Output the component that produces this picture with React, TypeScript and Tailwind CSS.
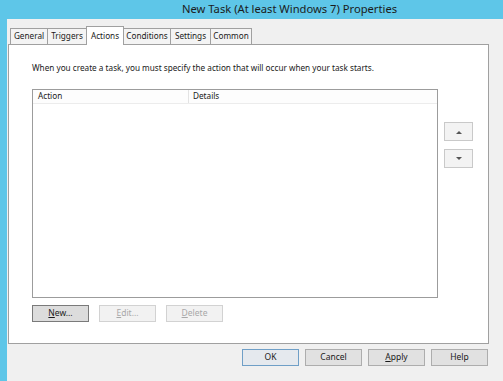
import React, { useState } from 'react';

const font = { fontFamily: '"Noto Sans", "Segoe UI", Arial, sans-serif' };

const TABS = ['General', 'Triggers', 'Actions', 'Conditions', 'Settings', 'Common'];
const TAB_WIDTHS: Record<string, string> = {
  General: 'w-[38px]',
  Triggers: 'w-[39px]',
  Actions: 'w-[38px]',
  Conditions: 'w-[47px]',
  Settings: 'w-[40px]',
  Common: 'w-[41px]',
};

const Btn: React.FC<{ label: string; hot?: number; variant?: 'normal' | 'focus' | 'default' | 'disabled' }> = ({
  label,
  hot,
  variant = 'normal',
}) => {
  const styles = {
    normal: 'bg-[#e1e1e1] border-[#adadad] text-[#1a1a1a]',
    focus: 'bg-[#dcdcdc] border-[#7a7a7a] text-[#1a1a1a]',
    default: 'bg-[#e5e9ee] border-[#6f9fc7] text-[#1a1a1a]',
    disabled: 'bg-[#f2f2f2] border-[#d2d2d2] text-[#a8a8a8]',
  }[variant];
  return (
    <button className={`w-[57px] h-[17px] border flex items-center justify-center text-[8.5px] leading-none ${styles}`}>
      {hot !== undefined ? (
        <span>
          {label.slice(0, hot)}
          <span className="underline">{label[hot]}</span>
          {label.slice(hot + 1)}
        </span>
      ) : (
        label
      )}
    </button>
  );
};

const App: React.FC = () => {
  const [activeTab, setActiveTab] = useState('Actions');

  return (
    <div className="w-[503px] h-[381px] overflow-hidden flex flex-col bg-[#5ec6e8]" style={font}>
      {/* Title bar */}
      <div className="h-[19px] shrink-0 flex items-center pl-[182px] text-[11.2px] text-[#1b1b1b] whitespace-nowrap">
        New Task (At least Windows 7) Properties
      </div>

      <div className="flex-1 flex">
        {/* left window frame */}
        <div className="w-[7px] shrink-0" />

        <div className="flex-1 bg-[#f0f0f0] flex flex-col pl-[1px]">
          {/* Tabs */}
          <div className="flex items-end h-[25px] pl-[2px] pt-[6px] relative z-10">
            {TABS.map((t) => {
              const active = t === activeTab;
              return (
                <div
                  key={t}
                  onClick={() => setActiveTab(t)}
                  className={`${TAB_WIDTHS[t]} flex justify-center cursor-default text-[8.2px] text-[#1a1a1a] border-[#a0a0a0] border-t border-r ${
                    t === 'General' ? 'border-l' : ''
                  } ${
                    active
                      ? 'bg-white h-[19px] -mb-[1px] items-start pt-[3px] border-l -ml-[1px]'
                      : 'bg-[#f4f4f4] h-[16px] items-center'
                  }`}
                >
                  {t}
                </div>
              );
            })}
          </div>

          {/* Tab panel */}
          <div className="w-[481px] h-[300px] bg-white border border-[#a0a0a0] pl-[23px] flex flex-col">
            <p className="mt-[17px] text-[8.2px] leading-[12px] text-[#1a1a1a] whitespace-nowrap">
              When you create a task, you must specify the action that will occur when your task starts.
            </p>

            <div className="mt-[15px] flex">
              {/* list view */}
              <div className="w-[406px] h-[209px] border border-[#9c9c9c] flex flex-col">
                <div className="h-[14px] flex text-[8.2px] text-[#1a1a1a] border-b border-[#ececec] bg-[#fdfdfd]">
                  <div className="w-[156px] border-r border-[#e3e3e3] pl-[5px] flex items-center">Action</div>
                  <div className="flex-1 pl-[4px] flex items-center">Details</div>
                </div>
                <div className="flex-1 bg-white" />
              </div>

              <div className="ml-[6px] mt-[33px] flex flex-col gap-[8px]">
                <button className="w-[29px] h-[19px] bg-[#f3f3f3] border border-[#c9c9c9] flex items-center justify-center">
                  <svg width="6" height="4" viewBox="0 0 6 4">
                    <path d="M0 4 L3 1 L6 4 Z" fill="#555" />
                  </svg>
                </button>
                <button className="w-[29px] h-[19px] bg-[#f3f3f3] border border-[#c9c9c9] flex items-center justify-center">
                  <svg width="6" height="4" viewBox="0 0 6 4">
                    <path d="M0 0 L6 0 L3 3 Z" fill="#555" />
                  </svg>
                </button>
              </div>
            </div>

            <div className="mt-[7px] flex gap-[10px]">
              <Btn label="New..." hot={0} variant="focus" />
              <Btn label="Edit..." hot={0} variant="disabled" />
              <Btn label="Delete" hot={0} variant="disabled" />
            </div>
          </div>

          {/* Dialog buttons */}
          <div className="mt-[5px] w-[481px] pr-[1px] flex justify-end gap-[6px]">
            <Btn label="OK" variant="default" />
            <Btn label="Cancel" />
            <Btn label="Apply" hot={0} />
            <Btn label="Help" />
          </div>
        </div>
      </div>
    </div>
  );
};

export default App;
